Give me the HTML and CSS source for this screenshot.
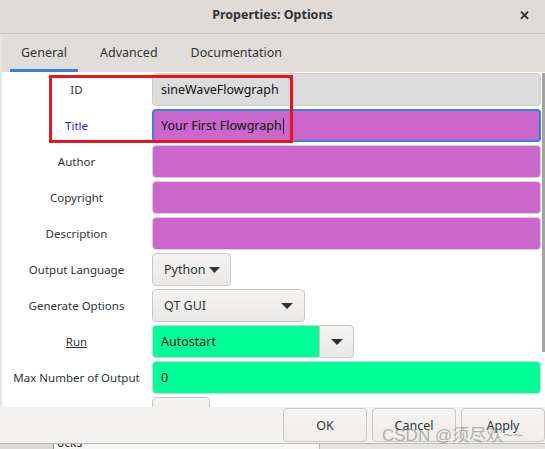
FILE: index.html
```html
<!DOCTYPE html>
<html>
<head>
<meta charset="utf-8">
<link rel="stylesheet" href="styles.css">
</head>
<body>
<div class="dialog">
  <div class="titlebar">
    <span class="title">Properties: Options</span>
    <span class="close">✕</span>
  </div>
  <div class="body">
    <div class="tabs">
      <div class="tab active">General</div>
      <div class="tab">Advanced</div>
      <div class="tab">Documentation</div>
    </div>
    <div class="content">
      <div class="row">
        <div class="label">ID</div>
        <div class="field grey">sineWaveFlowgraph</div>
      </div>
      <div class="row">
        <div class="label blue">Title</div>
        <div class="field magenta focus">Your First Flowgraph<span class="cursor"></span></div>
      </div>
      <div class="row">
        <div class="label">Author</div>
        <div class="field magenta"></div>
      </div>
      <div class="row">
        <div class="label">Copyright</div>
        <div class="field magenta"></div>
      </div>
      <div class="row">
        <div class="label">Description</div>
        <div class="field magenta"></div>
      </div>
      <div class="row">
        <div class="label">Output Language</div>
        <div class="combo small">Python <svg class="arrow" width="11" height="6" viewBox="0 0 11 6"><path d="M0 0h11L5.5 6z"/></svg></div>
      </div>
      <div class="row">
        <div class="label">Generate Options</div>
        <div class="combo wide"><span>QT GUI</span><svg class="arrow" width="12" height="6" viewBox="0 0 12 6"><path d="M0 0h12L6 6z"/></svg></div>
      </div>
      <div class="row">
        <div class="label under">Run</div>
        <div class="entrycombo">
          <div class="field green">Autostart</div>
          <div class="dropbtn"><svg class="arrow" width="12" height="6" viewBox="0 0 12 6"><path d="M0 0h12L6 6z"/></svg></div>
        </div>
      </div>
      <div class="row">
        <div class="label">Max Number of Output</div>
        <div class="field green">0</div>
      </div>
      <div class="row">
        <div class="label"></div>
        <div class="combo stub"></div>
      </div>
      <div class="scrollbar"></div>
      <div class="highlight"></div>
    </div>
  </div>
  <div class="actions">
    <button class="btn">OK</button>
    <button class="btn">Cancel</button>
    <button class="btn">Apply</button>
  </div>
</div>
<div class="behind">
  <div class="behind-left"></div>
  <div class="behind-main"><span class="behind-text">ocks</span></div>
  <div class="behind-right"></div>
</div>
<div class="watermark">CSDN @须尽欢~~</div>
</body>
</html>
```

FILE: styles.css
```css
* { box-sizing: border-box; }
html, body {
  margin: 0;
  padding: 0;
}
body {
  width: 545px;
  height: 449px;
  overflow: hidden;
  background: #d4d2cf;
  font-family: "Noto Sans", "Open Sans", sans-serif;
  font-size: 12px;
  color: #2e3436;
  position: relative;
}
.dialog {
  display: flex;
  flex-direction: column;
  height: 443px;
  background: #f3f2f1;
}
.titlebar {
  height: 34px;
  flex: none;
  background: #dfdcd8;
  border-bottom: 1px solid #c9c5c0;
  display: flex;
  align-items: center;
  justify-content: center;
  position: relative;
  padding-bottom: 5px;
}
.title {
  font-weight: bold;
  font-size: 12.5px;
  color: #2e3436;
}
.close {
  position: absolute;
  right: 15px;
  top: 6px;
  font-size: 13px;
  font-weight: bold;
  color: #2e3436;
}
.body {
  flex: none;
  height: 373px;
  border-left: 2px solid #e9e7e4;
  display: flex;
  flex-direction: column;
}
.tabs {
  height: 38px;
  flex: none;
  background: #e1deda;
  display: flex;
  align-items: stretch;
  padding-left: 8px;
  gap: 11px;
}
.tab {
  padding: 0 11px;
  font-size: 12.5px;
  color: #2e3436;
  display: flex;
  align-items: center;
  border-bottom: 3px solid transparent;
  padding-top: 1px;
}
.tab.active {
  border-bottom-color: #3584e4;
}
.content {
  flex: 1;
  background: #ffffff;
  position: relative;
  overflow: hidden;
  padding: 1px 4px 0 0;
  display: flex;
  flex-direction: column;
  gap: 3px;
}
.row {
  display: flex;
  height: 33px;
  flex: none;
  align-items: stretch;
}
.label {
  width: 150px;
  flex: none;
  display: flex;
  align-items: center;
  justify-content: center;
  color: #2e3436;
  font-size: 11.5px;
  padding-right: 1px;
}
.label.blue { color: #1f1fd6; }
.label.under { text-decoration: underline; }
.field {
  flex: 1;
  border: 1px solid #cfcac5;
  border-radius: 4px;
  display: flex;
  align-items: center;
  padding-left: 8px;
  font-size: 12.5px;
  color: #111;
}
.field.grey { background: #dcdcdc; }
.field.magenta { background: #cb66cb; border-color: #d9d0d9; }
.field.focus { border: 2px solid #3584e4; padding-left: 7px; }
.field.green { background: #00ff99; border-color: #d0d6d2; }
.cursor {
  display: inline-block;
  width: 1px;
  height: 16px;
  background: #111;
  margin-left: 1px;
}
.combo {
  flex: none;
  border: 1px solid #cdc7c2;
  border-radius: 4px;
  background: linear-gradient(#f4f3f2, #ebe9e7);
  display: flex;
  align-items: center;
  font-size: 12.5px;
  color: #2e3436;
}
.combo.small {
  width: 79px;
  padding-left: 11px;
  gap: 4px;
}
.combo.wide {
  width: 153px;
  padding: 0 11px 0 11px;
  justify-content: space-between;
}
.combo.stub {
  width: 58px;
}
.arrow { fill: #2e3436; }
.entrycombo {
  display: flex;
  width: 202px;
  flex: none;
}
.entrycombo .field {
  border-radius: 4px 0 0 4px;
  border-right: none;
  flex: 1;
}
.dropbtn {
  width: 35px;
  flex: none;
  border: 1px solid #cdc7c2;
  border-radius: 0 4px 4px 0;
  background: linear-gradient(#f4f3f2, #ebe9e7);
  display: flex;
  align-items: center;
  justify-content: center;
}
.scrollbar {
  position: absolute;
  right: 0;
  top: 1px;
  width: 3px;
  height: 279px;
  background: #a3a3a3;
}
.highlight {
  position: absolute;
  left: 47px;
  top: 3px;
  width: 244px;
  height: 68px;
  border: 3px solid #e5161d;
}
.actions {
  flex: none;
  height: 36px;
  display: flex;
  justify-content: flex-end;
  align-items: flex-start;
  padding-top: 1px;
  gap: 5px;
  background: #f3f2f1;
}
.btn {
  width: 84px;
  height: 34px;
  border: 1px solid #cdc7c2;
  border-radius: 4px;
  background: linear-gradient(#f5f4f3, #eeedeb);
  font-family: "Noto Sans", "Open Sans", sans-serif;
  font-size: 12.5px;
  color: #2e3436;
  padding: 0;
}
.behind {
  height: 6px;
  display: flex;
  border-top: 1px solid #bdbbb8;
  overflow: hidden;
}
.behind-left {
  width: 54px;
  background: #dcdad7;
  border-right: 1px solid #8e8c89;
}
.behind-main {
  width: 266px;
  background: #f7f7f6;
  border-right: 1px solid #b8b6b3;
  overflow: hidden;
}
.behind-text {
  display: block;
  font-size: 12px;
  line-height: 12px;
  margin-top: -7px;
  padding-left: 3px;
  color: #222;
}
.behind-right {
  flex: 1;
  background: #e6e4e1;
}
.watermark {
  position: absolute;
  left: 382px;
  top: 421px;
  font-family: "Liberation Sans", "Noto Sans CJK SC", sans-serif;
  font-size: 17px;
  color: rgba(120, 120, 120, 0.55);
  white-space: nowrap;
}
```
